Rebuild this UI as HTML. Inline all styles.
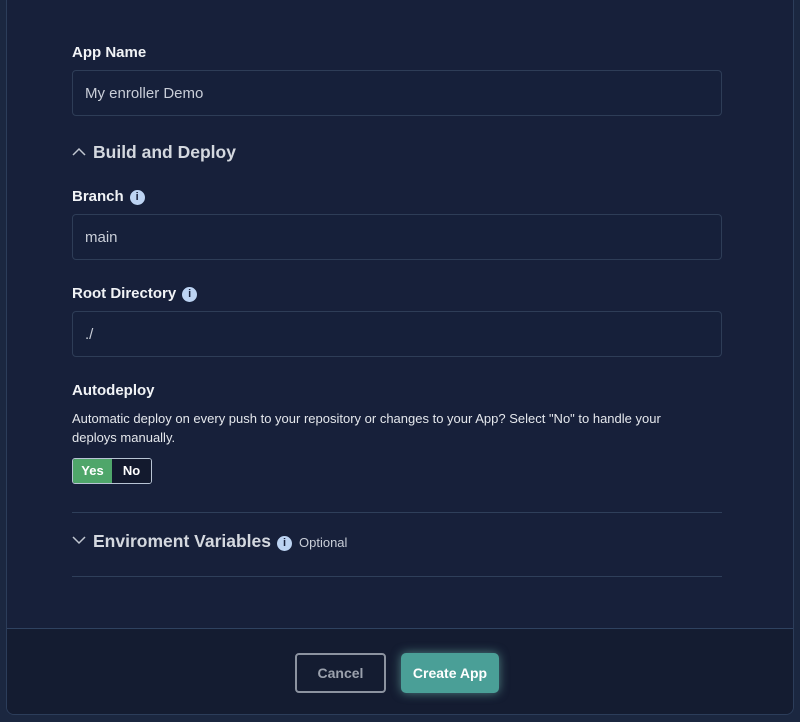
<!DOCTYPE html>
<html><head><style>
*{box-sizing:border-box;margin:0;padding:0}
body{width:800px;height:722px;background:#1b2740;font-family:"Liberation Sans",sans-serif;position:relative;overflow:hidden}
.card{position:absolute;left:6px;top:-10px;width:788px;height:725px;background:#17203a;border:1px solid #2c3d5a;border-radius:8px;overflow:hidden}
.foot{position:absolute;left:0;right:0;top:637px;bottom:0;background:#141c31;border-top:1px solid #2f4260}
.abs{position:absolute}
.lbl{color:#f1f3f6;font-size:15px;font-weight:bold}
.inp{position:absolute;left:65px;width:650px;height:46px;border:1px solid #2e3d57;border-radius:4px;background:#16203a;color:#c9ced8;font-size:15px;padding:14px 12px}
.info{display:inline-block;width:15px;height:15px;border-radius:50%;background:#bcd3f2;color:#17203a;font-size:11px;font-weight:bold;text-align:center;line-height:15px;vertical-align:1px;margin-left:6px}
.hr{position:absolute;left:65px;width:650px;height:1px;background:#2f3f5a}
.hd{color:#d4d8df;font-size:17.5px;font-weight:bold}
.hd svg{vertical-align:2px;margin-right:7px}
</style></head><body>
<div class="card">
<div class="abs lbl" style="left:65px;top:53px">App Name</div>
<div class="inp" style="top:79px">My enroller Demo</div>
<div class="abs hd" style="left:65px;top:151px"><svg width="14" height="9" viewBox="0 0 14 9"><path d="M1 8 L7 2 L13 8" fill="none" stroke="#c0c6d0" stroke-width="1.5"/></svg>Build and Deploy</div>
<div class="abs lbl" style="left:65px;top:197px">Branch<span class="info">i</span></div>
<div class="inp" style="top:223px">main</div>
<div class="abs lbl" style="left:65px;top:294px">Root Directory<span class="info">i</span></div>
<div class="inp" style="top:320px">./</div>
<div class="abs lbl" style="left:65px;top:391px">Autodeploy</div>
<div class="abs" style="left:65px;top:418px;width:630px;color:#e4e7ec;font-size:13px;line-height:19px">Automatic deploy on every push to your repository or changes to your App? Select "No" to handle your deploys manually.</div>
<div class="abs" style="left:65px;top:467px;width:80px;height:26px;border:1px solid #b8c4d4;border-radius:3px;overflow:hidden;display:flex;font-size:13px;font-weight:bold;color:#fff">
<div style="width:39px;background:#4fa66a;text-align:center;line-height:24px">Yes</div>
<div style="flex:1;background:#131a2e;text-align:center;line-height:24px">No</div></div>
<div class="hr" style="top:521px"></div>
<div class="abs hd" style="left:65px;top:540px"><svg width="14" height="9" viewBox="0 0 14 9"><path d="M1 1 L7 7 L13 1" fill="none" stroke="#c0c6d0" stroke-width="1.5"/></svg>Enviroment Variables<span class="info">i</span><span style="font-weight:normal;font-size:13px;color:#c9ced8;margin-left:7px">Optional</span></div>
<div class="hr" style="top:585px"></div>
<div class="foot">
<div class="abs" style="left:288px;top:24px;width:91px;height:40px;border:2px solid #8c93a0;border-radius:4px;color:#9ba1ad;font-size:14px;font-weight:bold;text-align:center;line-height:36px">Cancel</div>
<div class="abs" style="left:394px;top:24px;width:98px;height:40px;background:#4a9f97;border-radius:5px;color:#fff;font-size:14px;font-weight:bold;text-align:center;line-height:40px;box-shadow:0 0 10px rgba(140,230,210,0.5)">Create App</div>
</div>
</div>
</body></html>
